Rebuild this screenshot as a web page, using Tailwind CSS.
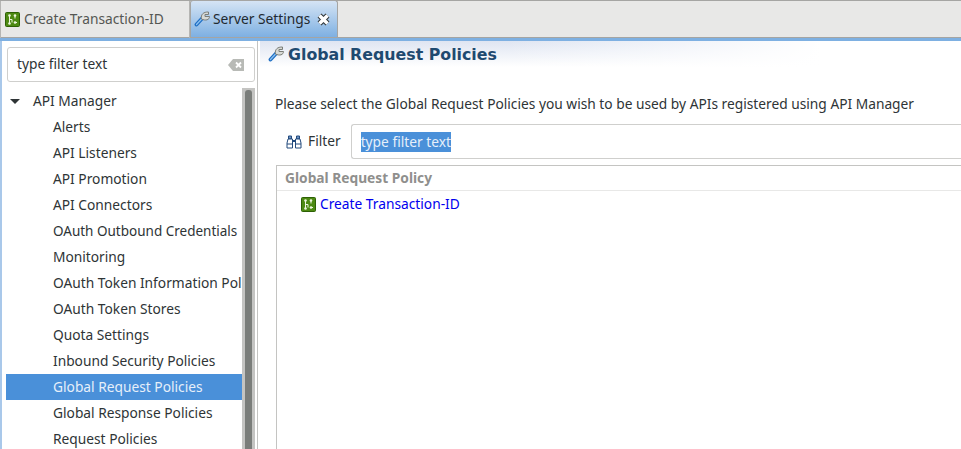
<!DOCTYPE html>
<html lang="en">
<head>
    <meta charset="UTF-8">
    <title>Server Settings</title>
    <script src="https://cdn.jsdelivr.net/npm/@tailwindcss/browser@4"></script>
</head>
<body class="w-[961px] h-[449px] overflow-hidden bg-white text-[13.75px] text-[#2e3436] font-['Noto_Sans',sans-serif]">
    <!-- tab bar -->
    <div class="flex h-[38px] bg-[#e8e8e7] border-t border-b border-[#a5a5a3]">
        <div class="flex items-center w-[190px] h-[37px] pl-[4px] gap-[4px] border-x border-[#b5b5b3]">
            <svg width="15" height="15" viewBox="0 0 15 15"><rect x=".5" y=".5" width="14" height="14" rx="1" fill="#4d8a12" stroke="#2d6005"/><path d="M4.500 3.500v8M4.500 7.500h2.500v3M10 3.500v3M10 10.500h2" stroke="#eef6e0" fill="none"/><circle cx="4.500" cy="3.500" r="1.300" fill="#eef6e0"/><circle cx="4.500" cy="11.500" r="1.300" fill="#eef6e0"/><circle cx="10" cy="3.500" r="1.300" fill="#eef6e0"/><circle cx="10" cy="10.500" r="1.300" fill="#eef6e0"/></svg>
            <span class="text-[#555753]">Create Transaction-ID</span>
        </div>
        <div class="flex items-center w-[148px] h-[37px] -mt-px pl-[3px] gap-[3px] rounded-t-[3px] border-x border-t border-[#a5a5a3] bg-gradient-to-b from-[#d5e4f4] to-[#7eb0e2]">
            <svg width="16" height="16" viewBox="0 0 16 16"><path d="M2.500 13.500 8.500 7" stroke="#1f6fc4" stroke-width="3.800" stroke-linecap="round"/><path d="M2.500 13.500 8.500 7" stroke="#8cc0f0" stroke-width="1.200" stroke-linecap="round"/><path d="M7.500 8C6.500 3.500 9.500 .8 14.500 1V3.500H11V5.500H15.500C15.500 9 11.500 10 7.500 8z" fill="#d8dad6" stroke="#7a7d78"/></svg>
            <span class="text-[#1f2a30]">Server Settings</span>
            <svg class="ml-[4px]" width="13" height="13" viewBox="0 0 13 13"><path d="M2.500 2.500l8 8M10.500 2.500l-8 8" stroke="#2e3436" stroke-width="5.500"/><path d="M2.500 2.500l8 8M10.500 2.500l-8 8" stroke="#fff" stroke-width="3.500"/></svg>
        </div>
    </div>
    <div class="h-[3px] bg-[#7eb0e2]"></div>

    <div class="flex h-[409px]">
        <!-- left tree -->
        <div class="w-[258px] flex flex-col shrink-0 border-l-2 border-[#a9c8ea] border-r border-r-[#c4c4c2]">
            <div class="h-[47px] pt-[6px] pl-[5px] pr-[2px]">
                <div class="flex items-center justify-between h-[35px] pl-[9px] pr-[10px] bg-white border border-[#cfcfcd] rounded-[3px]">
                    <span>type filter text</span>
                    <svg width="16" height="12" viewBox="0 0 16 12"><path d="M5 0h11v12H5L0 6z" fill="#b8bab6"/><path d="M8 3.500l5 5M13 3.500l-5 5" stroke="#fff" stroke-width="1.800"/></svg>
                </div>
            </div>
            <div class="flex flex-1 min-h-0 pl-[4px]">
                <div class="w-[236px] overflow-hidden">
                    <div class="flex items-center h-[26px]"><span class="w-[4px]"></span><span class="w-0 h-0 border-x-[5px] border-x-transparent border-t-[5px] border-t-[#2e3436]"></span><span class="ml-[13px]">API Manager</span></div>
                    <div class="h-[26px] leading-[26px] pl-[47px]">Alerts</div>
                    <div class="h-[26px] leading-[26px] pl-[47px]">API Listeners</div>
                    <div class="h-[26px] leading-[26px] pl-[47px]">API Promotion</div>
                    <div class="h-[26px] leading-[26px] pl-[47px]">API Connectors</div>
                    <div class="h-[26px] leading-[26px] pl-[47px] text-[13.5px]">OAuth Outbound Credentials</div>
                    <div class="h-[26px] leading-[26px] pl-[47px]">Monitoring</div>
                    <div class="h-[26px] leading-[26px] pl-[47px] whitespace-nowrap">OAuth Token Information Policies</div>
                    <div class="h-[26px] leading-[26px] pl-[47px]">OAuth Token Stores</div>
                    <div class="h-[26px] leading-[26px] pl-[47px]">Quota Settings</div>
                    <div class="h-[26px] leading-[26px] pl-[47px]">Inbound Security Policies</div>
                    <div class="h-[26px] leading-[26px] pl-[47px] bg-[#4a90d9] text-[#e6eff9]">Global Request Policies</div>
                    <div class="h-[26px] leading-[26px] pl-[47px]">Global Response Policies</div>
                    <div class="h-[26px] leading-[26px] pl-[47px]">Request Policies</div>
                </div>
                <!-- scrollbar -->
                <div class="w-[13px] bg-[#c4c4c2] flex justify-center pt-[2px]"><div class="w-[7px] h-full rounded-t-[3px] bg-[#7a7d7a]"></div></div>
            </div>
        </div>
        <div class="w-[2px]"></div>

        <!-- right side -->
        <div class="flex-1 min-w-0">
            <div class="h-[26px] bg-gradient-to-b from-[#dfe5f2] to-white">
                <div class="flex items-center h-full pl-[8px] gap-[4px] bg-gradient-to-r from-transparent from-[35%] to-white to-[80%]">
                    <svg width="16" height="16" viewBox="0 0 16 16"><path d="M2.500 13.500 8.500 7" stroke="#1f6fc4" stroke-width="3.800" stroke-linecap="round"/><path d="M2.500 13.500 8.500 7" stroke="#8cc0f0" stroke-width="1.200" stroke-linecap="round"/><path d="M7.500 8C6.500 3.500 9.500 .8 14.500 1V3.500H11V5.500H15.500C15.500 9 11.500 10 7.500 8z" fill="#d8dad6" stroke="#7a7d78"/></svg>
                    <span class="font-['DejaVu_Sans',sans-serif] font-bold text-[15.8px] text-[#1f4a70] relative top-[1px]">Global Request Policies</span>
                </div>
            </div>
            <p class="mt-[26px] ml-[15px] h-[31px] leading-[22px]">Please select the Global Request Policies you wish to be used by APIs registered using API Manager</p>
            <div class="flex items-center h-[35px] ml-[26px]">
                <svg width="16" height="14" viewBox="0 0 16 14"><path d="M2.500 1h3v3h-3zM10.500 1h3v3h-3z" fill="#6d93c4" stroke="#234a7d"/><path d="M1 13V8l1-4h4.500v9zM15 13V8l-1-4H9.500v9z" fill="#fff" stroke="#234a7d"/><path d="M1 9h5.500M9.500 9H15" stroke="#234a7d"/><path d="M6.500 6h3" stroke="#234a7d" stroke-width="2"/></svg>
                <span class="ml-[6px]">Filter</span>
                <div class="flex items-center flex-1 h-[35px] ml-[10px] pl-[9px] border border-[#cfcfcd] border-r-0 rounded-l-[3px]">
                    <span class="bg-[#4a90d9] text-[#e6eff9] leading-[20px]">type filter text</span>
                </div>
            </div>
            <div class="mt-[6px] ml-[16px] h-[300px] border-l border-t border-[#c4c4c2]">
                <div class="h-[25px] leading-[24px] pl-[8px] font-bold text-[#8f8f8d] border-b border-[#e8e8e7]">Global Request Policy</div>
                <div class="flex items-center h-[26px] pl-[24px] gap-[4px]">
                    <svg width="15" height="15" viewBox="0 0 15 15"><rect x=".5" y=".5" width="14" height="14" rx="1" fill="#4d8a12" stroke="#2d6005"/><path d="M4.500 3.500v8M4.500 7.500h2.500v3M10 3.500v3M10 10.500h2" stroke="#eef6e0" fill="none"/><circle cx="4.500" cy="3.500" r="1.300" fill="#eef6e0"/><circle cx="4.500" cy="11.500" r="1.300" fill="#eef6e0"/><circle cx="10" cy="3.500" r="1.300" fill="#eef6e0"/><circle cx="10" cy="10.500" r="1.300" fill="#eef6e0"/></svg>
                    <span class="text-[#0000ee]">Create Transaction-ID</span>
                </div>
            </div>
        </div>
    </div>
</body>
</html>
